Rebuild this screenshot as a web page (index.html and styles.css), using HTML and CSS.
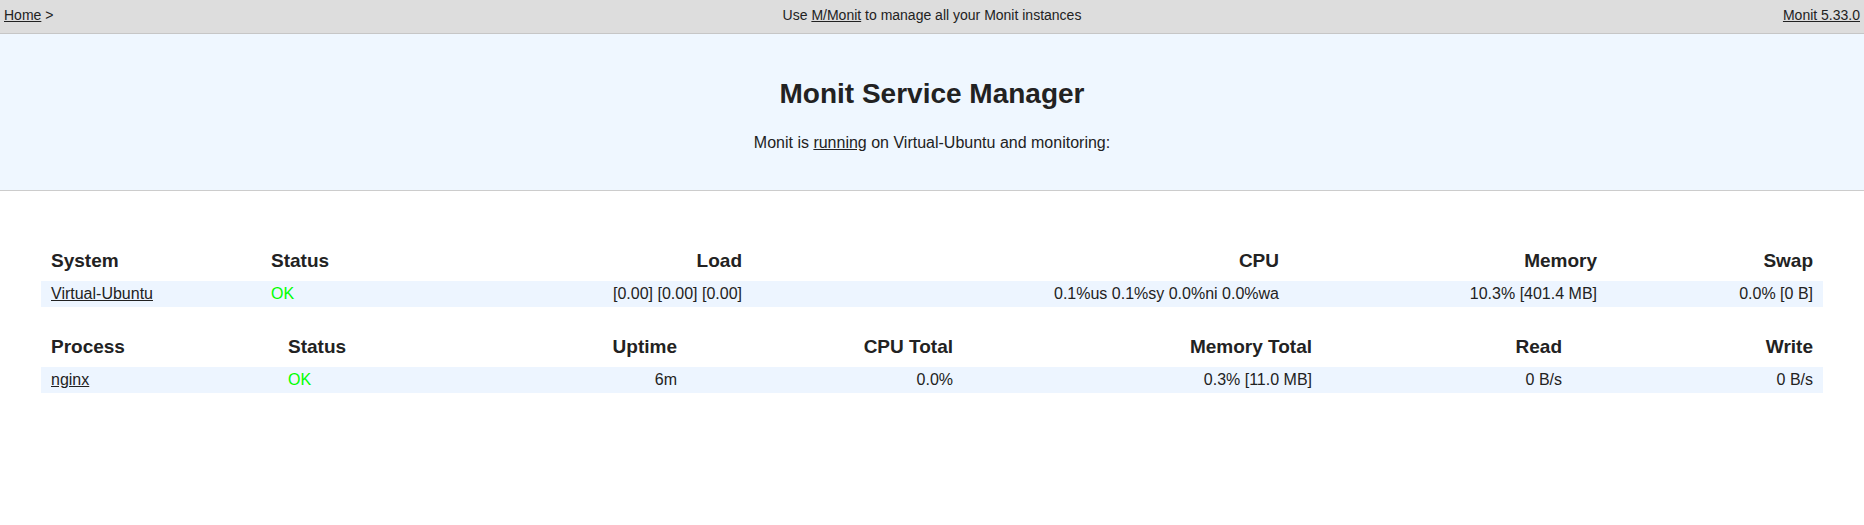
FILE: index.html
```html
<!DOCTYPE html>
<html lang="en">
<head>
<meta charset="utf-8">
<title>Monit: Virtual-Ubuntu</title>
<link rel="stylesheet" href="styles.css">
</head>
<body>
<div class="nav">
  <div class="nav-left"><a href="#">Home</a> &gt;</div>
  <div class="nav-center">Use <a href="#">M/Monit</a> to manage all your Monit instances</div>
  <div class="nav-right"><a href="#">Monit 5.33.0</a></div>
</div>
<div class="header">
  <h1 class="title">Monit Service Manager</h1>
  <p class="subtitle">Monit is <a href="#">running</a> on Virtual-Ubuntu and monitoring:</p>
</div>
<div class="content">
  <table class="status-table">
    <colgroup>
      <col class="c-220"><col class="c-200"><col class="c-291"><col class="c-537"><col class="c-318"><col class="c-216">
    </colgroup>
    <thead>
      <tr>
        <th class="left">System</th>
        <th class="left">Status</th>
        <th class="right">Load</th>
        <th class="right">CPU</th>
        <th class="right">Memory</th>
        <th class="right">Swap</th>
      </tr>
    </thead>
    <tbody>
      <tr class="stripe">
        <td class="left"><a href="#">Virtual-Ubuntu</a></td>
        <td class="left green-text">OK</td>
        <td class="right">[0.00]&nbsp;[0.00]&nbsp;[0.00]</td>
        <td class="right">0.1%us&nbsp;0.1%sy&nbsp;0.0%ni&nbsp;0.0%wa</td>
        <td class="right">10.3% [401.4&nbsp;MB]</td>
        <td class="right">0.0% [0&nbsp;B]</td>
      </tr>
    </tbody>
  </table>
  <table class="status-table second">
    <colgroup>
      <col class="c-237"><col class="c-200"><col class="c-209"><col class="c-276"><col class="c-359"><col class="c-250"><col class="c-251">
    </colgroup>
    <thead>
      <tr>
        <th class="left">Process</th>
        <th class="left">Status</th>
        <th class="right">Uptime</th>
        <th class="right">CPU Total</th>
        <th class="right">Memory Total</th>
        <th class="right">Read</th>
        <th class="right">Write</th>
      </tr>
    </thead>
    <tbody>
      <tr class="stripe">
        <td class="left"><a href="#">nginx</a></td>
        <td class="left green-text">OK</td>
        <td class="right">6m</td>
        <td class="right">0.0%</td>
        <td class="right">0.3% [11.0&nbsp;MB]</td>
        <td class="right">0&nbsp;B/s</td>
        <td class="right">0&nbsp;B/s</td>
      </tr>
    </tbody>
  </table>
</div>
</body>
</html>
```
FILE: styles.css
```css
html, body {
  margin: 0;
  padding: 0;
  background: #ffffff;
}
body {
  font-family: "Liberation Sans", Arial, Helvetica, sans-serif;
  font-size: 16px;
  color: #222222;
}
a {
  color: #222222;
  text-decoration: underline;
}

.nav {
  display: grid;
  grid-template-columns: 1fr auto 1fr;
  align-items: start;
  height: 34px;
  box-sizing: border-box;
  padding: 7px 4px 0;
  background: #dddddd;
  border-bottom: 1px solid #c6c6c6;
  font-size: 14px;
  line-height: 16px;
}
.nav-left { text-align: left; }
.nav-center { text-align: center; }
.nav-right { text-align: right; }

.header {
  background: #eff7ff;
  border-bottom: 1px solid #cccccc;
  padding: 44px 0 38px;
  text-align: center;
}
.title {
  margin: 0;
  font-size: 28px;
  line-height: 32px;
  font-weight: bold;
  color: #222222;
}
.subtitle {
  margin: 24px 0 0;
  font-size: 16px;
  line-height: 18px;
}

.content {
  padding: 49px 41px 0;
}
.status-table {
  width: 100%;
  table-layout: fixed;
  border-collapse: collapse;
  border-spacing: 0;
}
.status-table.second {
  margin-top: 19px;
}
.status-table th {
  font-size: 19px;
  line-height: 22px;
  font-weight: bold;
  padding: 10px 10px 9px;
  white-space: nowrap;
}
.status-table td {
  font-size: 16px;
  line-height: 18px;
  padding: 4px 10px;
  white-space: nowrap;
}
.left { text-align: left; }
.right { text-align: right; }
.stripe { background: #edf5ff; }
.green-text { color: #00ff00; }

.c-200 { width: 200px; }
.c-209 { width: 209px; }
.c-216 { width: 216px; }
.c-220 { width: 220px; }
.c-237 { width: 237px; }
.c-250 { width: 250px; }
.c-251 { width: 251px; }
.c-276 { width: 276px; }
.c-291 { width: 291px; }
.c-318 { width: 318px; }
.c-359 { width: 359px; }
.c-537 { width: 537px; }
```
